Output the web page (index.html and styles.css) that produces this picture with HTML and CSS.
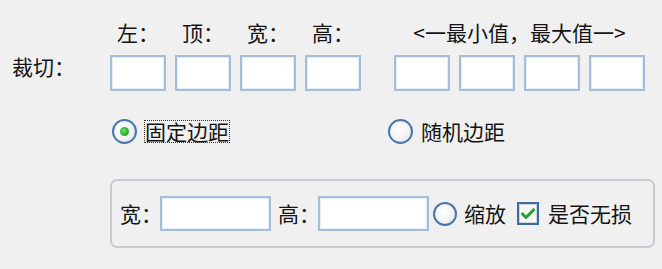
FILE: index.html
```html
<!DOCTYPE html>
<html lang="zh-CN">
<head>
<meta charset="utf-8">
<title>裁切</title>
<link rel="stylesheet" href="styles.css">
</head>
<body>
<div class="page">
  <div class="crop-grid">
    <div class="cell"></div>
    <div class="head">左：</div>
    <div class="head">顶：</div>
    <div class="head">宽：</div>
    <div class="head">高：</div>
    <div class="cell"></div>
    <div class="range">&lt;一最小值，最大值一&gt;</div>

    <div class="crop-label">裁切：</div>
    <div class="field"></div>
    <div class="field"></div>
    <div class="field"></div>
    <div class="field"></div>
    <div class="cell"></div>
    <div class="field"></div>
    <div class="field"></div>
    <div class="field"></div>
    <div class="field"></div>
  </div>

  <div class="radios">
    <div class="opt">
      <span class="radio checked"><span class="dot"></span></span>
      <span class="txt focus">固定边距</span>
    </div>
    <div class="opt">
      <span class="radio"></span>
      <span class="txt">随机边距</span>
    </div>
  </div>

  <div class="group">
    <span class="glabel">宽：</span>
    <span class="field wide"></span>
    <span class="glabel second">高：</span>
    <span class="field wide"></span>
    <span class="radio small-gap"></span>
    <span class="txt">缩放</span>
    <span class="check">
      <svg width="14" height="12" viewBox="0 0 14 12"><path d="M1.5 6 L5 9.5 L12.5 2" fill="none" stroke="#22a52a" stroke-width="3" stroke-linecap="square"/></svg>
    </span>
    <span class="txt">是否无损</span>
  </div>
</div>
</body>
</html>
```

FILE: styles.css
```css
html, body {
  margin: 0;
  padding: 0;
  background: #f0f0f0;
}
body {
  font-family: "Noto Sans CJK SC", "Noto Sans", sans-serif;
  font-size: 21px;
  line-height: 21px;
  color: #141414;
}
.page {
  padding-top: 22px;
}
.crop-grid {
  display: grid;
  grid-template-columns: 101px repeat(4, 56px) 15px repeat(4, 56px);
  grid-template-rows: 21px 36px;
  column-gap: 9px;
  row-gap: 12px;
}
.head {
  padding-left: 7px;
  white-space: nowrap;
}
.range {
  grid-column: 7 / span 4;
  text-align: center;
  white-space: nowrap;
}
.crop-label {
  padding-left: 12px;
  margin-top: 1px;
  white-space: nowrap;
}
.field {
  box-sizing: border-box;
  height: 36px;
  background: #fff;
  border: 2px solid #a4bdd8;
  box-shadow: inset 0 0 0 1px #e4ecf5;
}
.radios {
  display: flex;
  align-items: center;
  gap: 159px;
  padding-left: 112px;
  margin-top: 28px;
  height: 25px;
}
.opt {
  display: flex;
  align-items: center;
  gap: 8px;
}
.radio {
  box-sizing: border-box;
  width: 25px;
  height: 25px;
  border-radius: 50%;
  border: 2px solid #4677ad;
  background: radial-gradient(circle at 40% 40%, #ffffff 0%, #f2f2f2 55%, #dcdcdc 100%);
  display: flex;
  align-items: center;
  justify-content: center;
  flex: none;
}
.dot {
  width: 9px;
  height: 9px;
  border-radius: 50%;
  background: radial-gradient(circle at 40% 40%, #6be06b 0%, #2bb02b 60%, #1f8a1f 100%);
}
.txt {
  white-space: nowrap;
}
.focus {
  outline: 1px dotted #333;
  outline-offset: 0px;
}
.group {
  box-sizing: border-box;
  margin-top: 35px;
  margin-left: 110px;
  width: 545px;
  height: 69px;
  border: 2px solid #cdc8d3;
  border-radius: 7px;
  display: flex;
  align-items: center;
  padding-left: 8px;
}
.glabel {
  width: 40px;
  white-space: nowrap;
}
.glabel.second {
  margin-left: 7px;
}
.field.wide {
  width: 111px;
  height: 35px;
}
.small-gap {
  width: 24px;
  height: 24px;
  margin-left: 4px;
  margin-right: 7px;
}
.check {
  box-sizing: border-box;
  width: 22px;
  height: 23px;
  margin-left: 11px;
  margin-right: 9px;
  border: 2px solid #3f6b98;
  background: #f6f6f6;
  box-shadow: inset 0 0 0 1px #c8d4e0;
  display: flex;
  align-items: center;
  justify-content: center;
  flex: none;
}
```
